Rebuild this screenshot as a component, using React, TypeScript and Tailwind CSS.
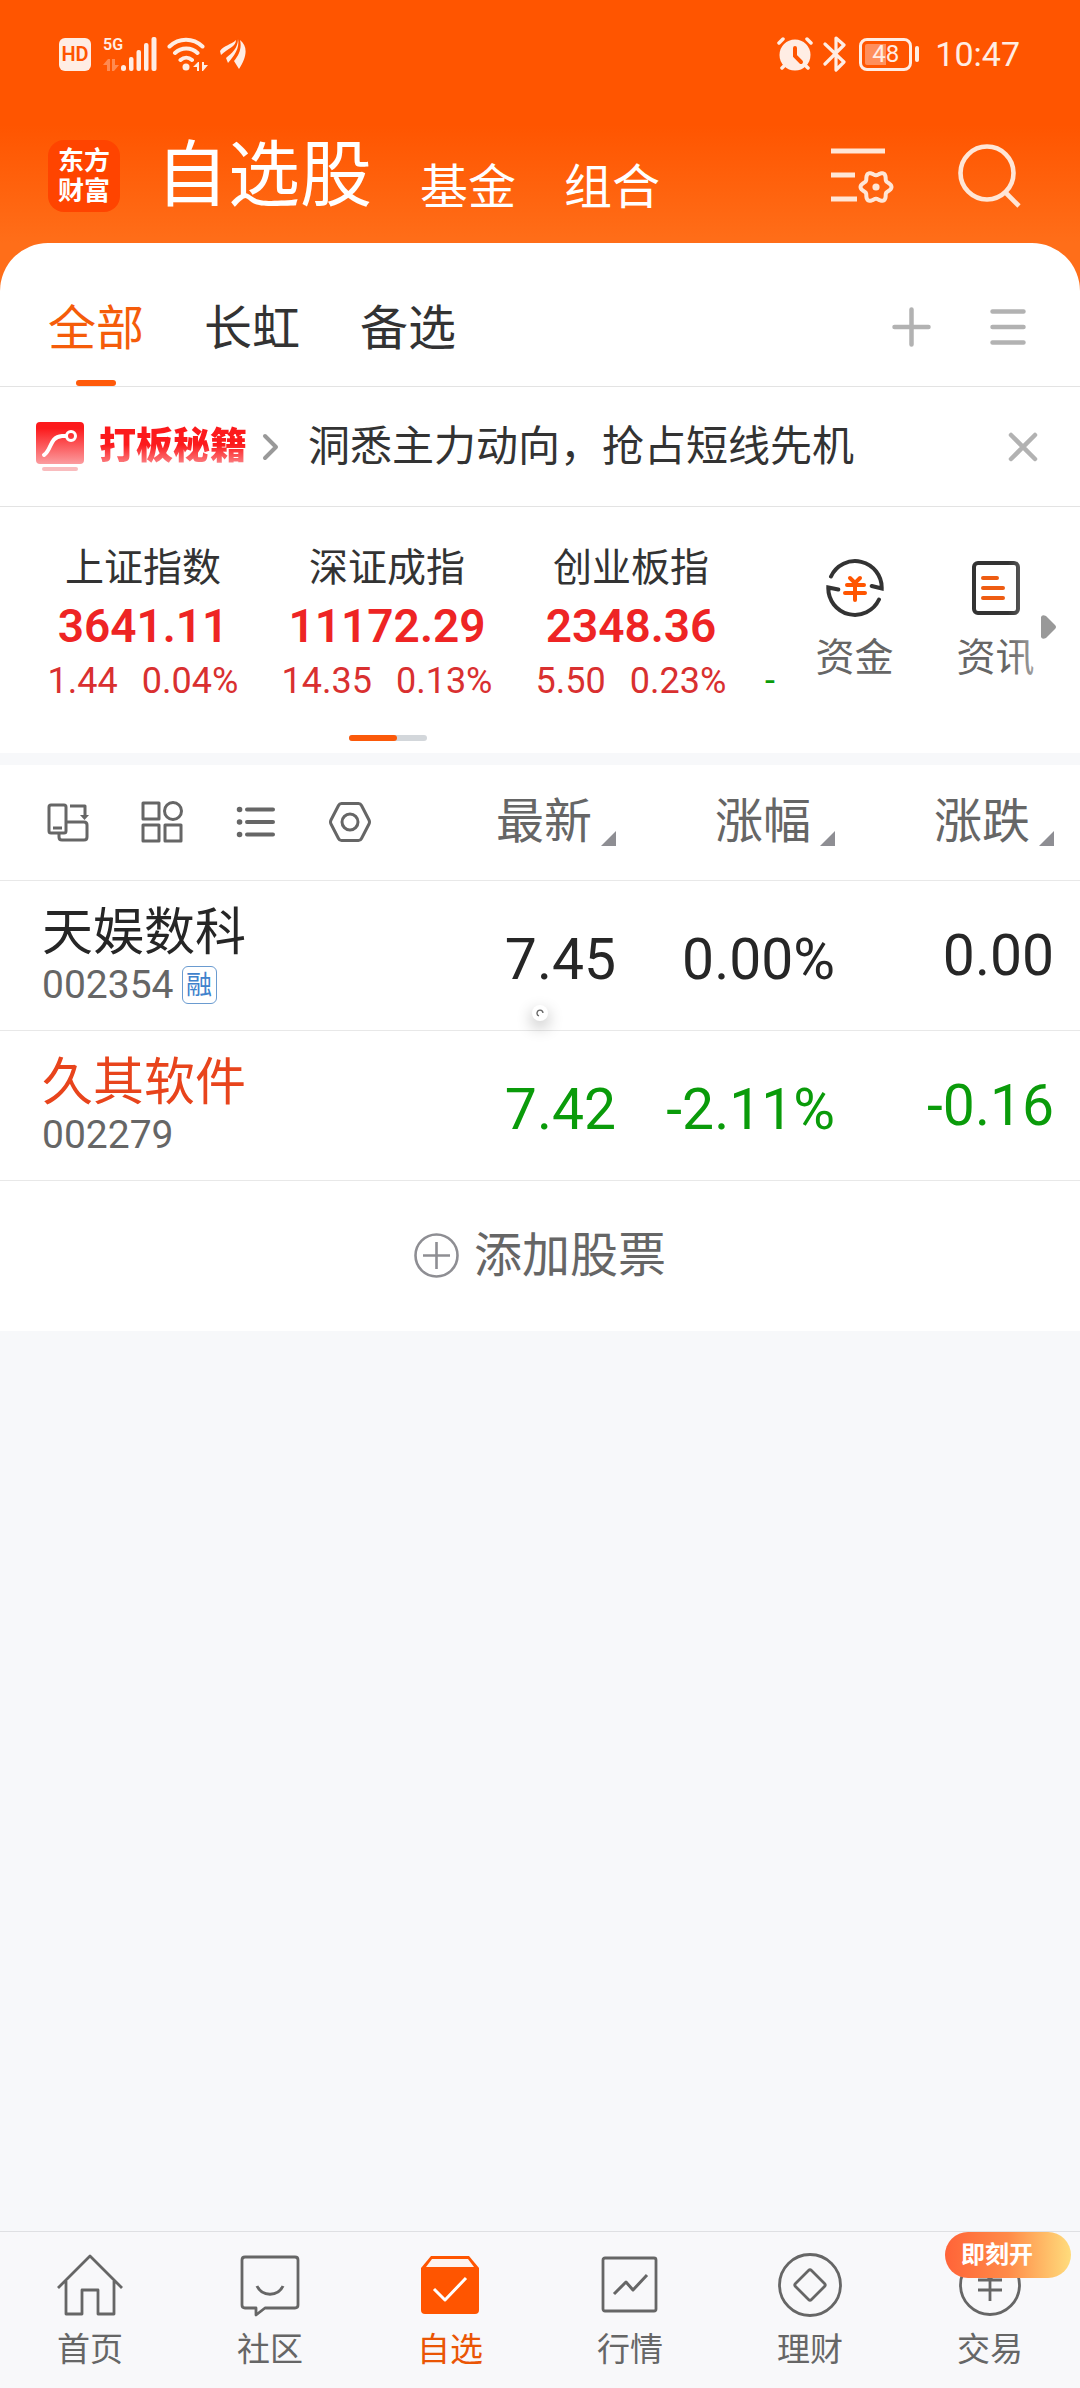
import type { ReactNode } from "react";

interface IndexQuote {
  name: string;
  value: string;
  change: string;
  percent: string;
}

interface Stock {
  name: string;
  code: string;
  tag?: string;
  nameColor: string;
  valueColor: string;
  price: string;
  percent: string;
  change: string;
}

const indices: IndexQuote[] = [
  { name: "上证指数", value: "3641.11", change: "1.44", percent: "0.04%" },
  { name: "深证成指", value: "11172.29", change: "14.35", percent: "0.13%" },
  { name: "创业板指", value: "2348.36", change: "5.50", percent: "0.23%" },
];

const stocks: Stock[] = [
  {
    name: "天娱数科",
    code: "002354",
    tag: "融",
    nameColor: "text-[#262626]",
    valueColor: "text-[#262626]",
    price: "7.45",
    percent: "0.00%",
    change: "0.00",
  },
  {
    name: "久其软件",
    code: "002279",
    nameColor: "text-[#e8441c]",
    valueColor: "text-[#0a9b0a]",
    price: "7.42",
    percent: "-2.11%",
    change: "-0.16",
  },
];

// six-lobed outline for the settings gear
const gearPoints = Array.from({ length: 72 }, (_, i) => {
  const a = (i * Math.PI) / 36;
  const r = 13.6 + 1.9 * Math.cos(6 * a);
  return `${(45 + r * Math.cos(a)).toFixed(2)},${(39 + r * Math.sin(a)).toFixed(2)}`;
}).join(" ");

function StatusBar() {
  return (
    <div className="flex h-[108px] items-center justify-between pl-[59px] pr-[60px] text-[#ffede4]">
      <div className="flex items-center">
        <span className="flex h-[33px] w-8 items-center justify-center rounded-md bg-[#ffede4] text-xl font-semibold leading-none text-[#ff5500]">
          HD
        </span>
        <div className="ml-3 flex h-[34px] items-end">
          <div className="flex h-[34px] w-[18px] flex-col justify-between">
            <span className="text-base font-semibold leading-4">5G</span>
            <svg width="16" height="12" viewBox="0 0 16 12" fill="currentColor" opacity="0.35">
              <path d="M0 6L5 0h2v12H4V6zM16 6l-5 6H9V0h3v6z" />
            </svg>
          </div>
          <svg width="36" height="34" viewBox="0 0 36 34" fill="currentColor">
            <rect x="0" y="28" width="5" height="6" rx="2.5" />
            <rect x="8" y="20" width="4.5" height="14" rx="2" />
            <rect x="15.5" y="13" width="4.5" height="21" rx="2" />
            <rect x="23" y="6" width="4.5" height="28" rx="2" />
            <rect x="30.5" y="0" width="5" height="34" rx="2" />
          </svg>
        </div>
        <svg className="ml-2.5" width="41" height="34" viewBox="0 0 41 34" fill="none" stroke="currentColor" strokeWidth="4" strokeLinecap="round">
          <path d="M2.500 9.500C12 0.500 26 0.500 35.500 9.500M8 16c6.500-6 16-6 22.500 0M13.500 23c3.500-3 8-3 11.500 0" />
          <circle cx="19" cy="30" r="3.500" fill="currentColor" stroke="none" />
          <path d="M26 30l5-5h1v9h-2v-4zM41 28l-5 6h-1V25h2v3z" fill="currentColor" stroke="none" />
        </svg>
        <svg className="ml-3" width="26" height="30" viewBox="0 0 26 30" fill="currentColor">
          <path d="M0 12C4 6 11 6 16 1c0 7-8 8-15 15z" />
          <path d="M18 0c2 9-4 17-10 24l-2-5C12 14 18 9 18 0z" />
          <path d="M20 1c9 7 6 18-1 29l-5-8C19 16 22 9 20 1z" />
        </svg>
      </div>

      <div className="flex items-center">
        <svg width="36" height="34" viewBox="0 0 36 34" fill="none" stroke="currentColor" strokeWidth="3.500" strokeLinecap="round">
          <circle cx="18" cy="18" r="15.500" fill="currentColor" stroke="none" />
          <path d="M2 6l4-4M34 6l-4-4M5 31l4-4M31 31l-4-4" />
          <path d="M18 11v8l6 6" stroke="#ff5500" strokeWidth="4" />
        </svg>
        <svg className="ml-2.5" width="24" height="36" viewBox="0 0 24 36" fill="none" stroke="currentColor" strokeWidth="3.200" strokeLinecap="round" strokeLinejoin="round">
          <path d="M2 8l19 18-8 8V2l8 7L2 28" />
        </svg>
        <div className="ml-3 flex h-[33px] w-[53px] items-center justify-center rounded-lg border-3 border-[#ffede4] bg-[linear-gradient(90deg,#ff8f5c_50%,transparent_50%)] bg-clip-content p-[3px] text-2xl leading-none">
          48
        </div>
        <span className="ml-[3px] h-4 w-1 rounded-sm bg-[#ffede4]" />
        <span className="ml-4 text-[34px] leading-none">10:47</span>
      </div>
    </div>
  );
}

function AppHeader() {
  return (
    <header className="bg-[linear-gradient(#ff5500_125px,#ff6e19_243px)] pb-12">
      <StatusBar />
      <div className="flex h-[135px] items-center pl-12 pr-[58px] text-white">
        <div className="flex size-[72px] flex-col items-center justify-center rounded-2xl bg-[#ff4400] text-[26px] font-bold leading-[30px]">
          <span>东方</span>
          <span>财富</span>
        </div>
        <nav className="ml-9 flex items-end gap-12 text-5xl leading-none">
          <a href="#watchlist" className="text-7xl leading-none">自选股</a>
          <a href="#fund">基金</a>
          <a href="#portfolio">组合</a>
        </nav>
        <button type="button" aria-label="列表设置" className="ml-auto">
          <svg width="64" height="60" viewBox="0 0 64 60" fill="none" stroke="#ffe6d6" strokeWidth="5">
            <path d="M0 5h54M0 29h24M0 53h26" />
            <g transform="translate(0 2)">
              <polygon points={gearPoints} strokeWidth="4" strokeLinejoin="round" />
              <circle cx="45" cy="39" r="3.600" fill="#ffe6d6" stroke="none" />
            </g>
          </svg>
        </button>
        <button type="button" aria-label="搜索" className="ml-[63px]">
          <svg width="64" height="66" viewBox="0 0 64 66" fill="none" stroke="#ffe6d6" strokeWidth="4.600">
            <circle cx="29" cy="30" r="26.500" />
            <path d="M47 49l14 14" />
          </svg>
        </button>
      </div>
    </header>
  );
}

function GroupTabs() {
  return (
    <div className="flex h-36 items-stretch border-b border-[#e3e3e3] pl-12 pr-[54px] text-5xl text-[#333]">
      <div className="flex gap-[60px]">
        <button type="button" className="relative pt-7 text-[#f55c0a]">
          全部
          <span className="absolute inset-x-7 bottom-0 h-1.5 rounded-full bg-[#ff5a0a]" />
        </button>
        <button type="button" className="pt-7">长虹</button>
        <button type="button" className="pt-7">备选</button>
      </div>
      <div className="ml-auto flex items-center gap-[59px] pt-6">
        <button type="button" aria-label="添加分组">
          <svg width="39" height="40" viewBox="0 0 39 40" stroke="#b2b2b2" strokeWidth="4.500" strokeLinecap="round">
            <path d="M19.500 2.500v35M2.500 20h34" />
          </svg>
        </button>
        <button type="button" aria-label="管理分组">
          <svg width="36" height="40" viewBox="0 0 36 40" stroke="#b2b2b2" strokeWidth="4.500" strokeLinecap="round">
            <path d="M2.500 4.500h31M2.500 20h31M2.500 35.500h31" />
          </svg>
        </button>
      </div>
    </div>
  );
}

function PromoBar() {
  return (
    <div className="flex h-[120px] items-center border-b border-[#e3e3e3] pl-9 pr-[41px]">
      <a href="#tips" className="flex items-center">
        <svg width="48" height="50" viewBox="0 0 48 50" fill="none">
          <defs>
            <linearGradient id="promo" x1="0" y1="0" x2="0" y2="1">
              <stop offset="0.150" stopColor="#fc1a1c" />
              <stop offset="1" stopColor="#fb9c9f" />
            </linearGradient>
          </defs>
          <rect width="48" height="42" rx="4" fill="url(#promo)" />
          <path d="M8 33c8-5 5-18 18-19h4" stroke="white" strokeWidth="4" strokeLinecap="round" />
          <circle cx="35" cy="14" r="4.500" stroke="white" strokeWidth="3" />
          <rect x="6" y="45" width="36" height="4" rx="2" fill="#f9bcbe" />
        </svg>
        <span className="ml-[15px] bg-[linear-gradient(#fc1a1c_45%,#fb9093_95%)] bg-clip-text text-[37px] font-black leading-[44px] text-transparent">
          打板秘籍
        </span>
        <svg className="ml-[15px]" width="18" height="28" viewBox="0 0 18 28" fill="none" stroke="#999" strokeWidth="4" strokeLinecap="round" strokeLinejoin="round">
          <path d="M3 3l11 11L3 25" />
        </svg>
      </a>
      <p className="ml-7 text-[42px] leading-[48px] text-[#333]">洞悉主力动向，抢占短线先机</p>
      <button type="button" aria-label="关闭" className="ml-auto">
        <svg width="32" height="32" viewBox="0 0 32 32" stroke="#b2b2b2" strokeWidth="4.500" strokeLinecap="round">
          <path d="M4 4l24 24M28 4L4 28" />
        </svg>
      </button>
    </div>
  );
}

function QuickLink({ label, children }: { label: string; children: ReactNode }) {
  return (
    <button type="button" className="flex w-[141px] flex-col items-center gap-[21px] text-[39px] leading-10 text-[#666]">
      <svg width="58" height="58" viewBox="0 0 58 58" fill="none" stroke="#333" strokeWidth="4" strokeLinecap="round">
        {children}
      </svg>
      {label}
    </button>
  );
}

function IndexStrip() {
  return (
    <section className="flex border-b-12 border-[#f7f8fa] pb-3">
      <div className="min-w-0 flex-1">
        <div className="flex overflow-hidden pl-[21px] pt-[41px]">
          {indices.map((item) => (
            <div key={item.name} className="flex w-[244px] shrink-0 flex-col items-center">
              <span className="text-[39px] leading-10 text-[#333]">{item.name}</span>
              <span className="mt-3.5 text-[46px] font-semibold leading-[48px] text-[#ee2424]">{item.value}</span>
              <span className="mt-[11px] flex gap-6 text-4xl leading-10 text-[#d93030]">
                <span>{item.change}</span>
                <span>{item.percent}</span>
              </span>
            </div>
          ))}
          <span className="ml-3 self-end text-4xl leading-10 text-[#0a9b0a]">-</span>
        </div>
        <div className="mx-auto mt-[34px] h-1.5 w-[78px] rounded-full bg-[#d3d7db]">
          <div className="h-1.5 w-12 rounded-full bg-[#fb590a]" />
        </div>
      </div>
      <div className="relative flex w-[304px] items-start pl-2 pt-[52px]">
        <QuickLink label="资金">
          <path d="M5 17.500A26.600 26.600 0 0 1 55.700 29.500l-10-2.500" />
          <path d="M53 40.500A26.600 26.600 0 0 1 2.300 28.500l10 2" />
          <path d="M24 19l5 5 5-5M21 26h17M19 34h20M29 25v16" stroke="#ff5500" />
        </QuickLink>
        <QuickLink label="资讯">
          <rect x="7" y="4" width="44" height="50" rx="4" />
          <path d="M16 19h14M16 29h20M16 39h20" stroke="#ee5c12" />
        </QuickLink>
        <div className="absolute bottom-12 right-6 top-12 w-12 bg-linear-to-r from-transparent to-white/70" />
        <svg className="absolute right-6 top-[108px]" width="15" height="24" viewBox="0 0 15 24" fill="#999">
          <path d="M0 2Q1-1 5 1l9 9q2 2 0 4l-9 9q-4 2-5-1z" />
        </svg>
      </div>
    </section>
  );
}

function SortHeader({ label }: { label: string }) {
  return (
    <button type="button" className="inline-flex items-end gap-[9px]">
      {label}
      <svg width="15" height="15" viewBox="0 0 15 15" fill="#8e8e93">
        <path d="M15 0v15H0z" />
      </svg>
    </button>
  );
}

function ToolButton({ label, children }: { label: string; children: ReactNode }) {
  return (
    <button type="button" aria-label={label}>
      <svg width="42" height="42" viewBox="0 0 42 42" fill="none" stroke="#666" strokeWidth="3" strokeLinejoin="round">
        {children}
      </svg>
    </button>
  );
}

function StockTable() {
  return (
    <table className="w-full table-fixed border-collapse">
      <colgroup>
        <col />
        <col className="w-[219px]" />
        <col className="w-[219px]" />
        <col className="w-[245px]" />
      </colgroup>
      <thead>
        <tr className="h-[115px] border-b border-[#e8e8e8] text-right text-5xl leading-none text-[#666]">
          <th className="pl-[47px] text-left font-normal">
            <div className="flex gap-[52px]">
              <ToolButton label="切换横屏">
                <rect x="2" y="4" width="17" height="28" rx="2" />
                <path d="M6 27h9" />
                <path d="M12 33v3q0 3 3 3h22q3 0 3-3V24q0-3-3-3H20M23 5h15v10" />
                <path d="M33 14h9l-4.500 5z" fill="#666" stroke="none" />
              </ToolButton>
              <ToolButton label="宫格">
                <rect x="2" y="2" width="16" height="16" />
                <circle cx="32" cy="10" r="8.500" />
                <rect x="2" y="24" width="16" height="16" />
                <rect x="24" y="24" width="16" height="16" />
              </ToolButton>
              <ToolButton label="列表">
                <path d="M12 8.500h26M12 21h26M12 33.500h26" strokeWidth="4" strokeLinecap="round" />
                <path d="M4.500 8.500h.1M4.500 21h.1M4.500 33.500h.1" strokeWidth="5.500" strokeLinecap="round" />
              </ToolButton>
              <ToolButton label="设置">
                <path d="M12.500 2.500h17q2 0 3 2l7.500 14.500q1 2 0 4L32.500 37.500q-1 2-3 2h-17q-2 0-3-2L2 23q-1-2 0-4L9.500 4.500q1-2 3-2z" />
                <circle cx="21" cy="21" r="8" />
              </ToolButton>
            </div>
          </th>
          <th className="font-normal"><SortHeader label="最新" /></th>
          <th className="font-normal"><SortHeader label="涨幅" /></th>
          <th className="pr-[26px] font-normal"><SortHeader label="涨跌" /></th>
        </tr>
      </thead>
      <tbody>
        {stocks.map((s) => (
          <tr key={s.code} className={`h-[150px] border-b border-[#e8e8e8] text-right text-[57px] leading-none ${s.valueColor}`}>
            <td className="pl-[42px] text-left">
              <div className={`text-[51px] leading-[60px] ${s.nameColor}`}>{s.name}</div>
              <div className="flex h-11 items-center gap-2 text-[39px] leading-none text-[#666]">
                {s.code}
                {s.tag && (
                  <span className="flex h-[38px] w-[35px] items-center justify-center rounded-md border border-[#6a9bd0] text-[26px] text-[#3f82cc]">
                    {s.tag}
                  </span>
                )}
              </div>
            </td>
            <td className="pt-2">{s.price}</td>
            <td className="pt-2">{s.percent}</td>
            <td className="pr-[26px]">{s.change}</td>
          </tr>
        ))}
      </tbody>
    </table>
  );
}

function NavItem({ label, active, badge, children }: { label: string; active?: boolean; badge?: string; children: ReactNode }) {
  return (
    <a
      href="#nav"
      className={`relative flex flex-1 flex-col items-center pt-5 text-[33px] leading-10 ${active ? "text-[#ea5504]" : "text-[#666]"}`}
    >
      <svg width="66" height="66" viewBox="0 0 66 66" fill="none" stroke="currentColor" strokeWidth="2.800" strokeLinejoin="round">
        {children}
      </svg>
      <span className="mt-3">{label}</span>
      {badge && (
        <span className="absolute right-[9px] top-0 flex h-[46px] w-[126px] items-center rounded-full bg-linear-to-r from-[#ff6338] via-[#ff8a48] to-[#ffdc7c] pl-4 text-2xl font-bold leading-none text-white">
          {badge}
        </span>
      )}
    </a>
  );
}

function BottomNav() {
  return (
    <nav className="flex h-[157px] border-t border-[#dfe0e3] bg-[#f8f8fa]">
      <NavItem label="首页">
        <path d="M1 36L33 4l32 32M9 29v33h16V38h16v24h16V29" />
      </NavItem>
      <NavItem label="社区">
        <path d="M8 5h50q3 0 3 3v45q0 3-3 3H28l-9 7v-7H8q-3 0-3-3V8q0-3 3-3z" />
        <path d="M20 34c5 11 21 11 26 0" strokeWidth="3" />
      </NavItem>
      <NavItem label="自选" active>
        <path d="M4 16L14 4h38l10 12v42q0 4-4 4H8q-4 0-4-4z" fill="#ff5500" stroke="none" />
        <path d="M9 15l6-8h36l6 8z" fill="#fdf3ee" stroke="none" />
        <path d="M17 37l11 11 21-22" stroke="#fff" strokeWidth="3" />
      </NavItem>
      <NavItem label="行情">
        <rect x="6" y="6" width="53" height="53" rx="2" />
        <path d="M17 42l12-12 7 8 14-15" strokeWidth="3" />
      </NavItem>
      <NavItem label="理财">
        <circle cx="33" cy="33" r="30.500" />
        <path d="M31.500 18.500q1.500-1.500 3 0l13 13q1.500 1.500 0 3l-13 13q-1.500 1.500-3 0l-13-13q-1.500-1.500 0-3z" />
      </NavItem>
      <NavItem label="交易" badge="即刻开">
        <circle cx="33" cy="33" r="29.500" />
        <path d="M23 16l10 11 10-11M21 28h24M21 38h24M33 27v22" />
      </NavItem>
    </nav>
  );
}

export default function App() {
  return (
    <div className="flex min-h-screen flex-col bg-[#f7f8fa] font-[Roboto,'Noto_Sans_CJK_SC',sans-serif]">
      <AppHeader />
      <main className="relative -mt-12 rounded-t-[48px] bg-white">
        <GroupTabs />
        <PromoBar />
        <IndexStrip />
        <div className="relative">
          <StockTable />
          {/* floating loading bubble */}
          <div className="absolute left-1/2 top-60 flex size-4 -translate-x-1/2 items-center justify-center rounded-full bg-white shadow-[0_6px_16px_rgba(0,0,0,0.3)]">
            <svg width="8" height="8" viewBox="0 0 8 8" fill="none" stroke="#666" strokeWidth="1.300">
              <path d="M3 7A3 3 0 1 1 7 4" />
            </svg>
          </div>
        </div>
        <button type="button" className="flex h-[150px] w-full items-center justify-center gap-[15px] text-5xl leading-none text-[#666]">
          <svg width="45" height="45" viewBox="0 0 45 45" fill="none" stroke="#8e8e93" strokeWidth="2.600">
            <circle cx="22.500" cy="22.500" r="21" />
            <path d="M9 22.500h27M22.500 9v27" />
          </svg>
          添加股票
        </button>
      </main>
      <div className="flex-1" />
      <BottomNav />
    </div>
  );
}
